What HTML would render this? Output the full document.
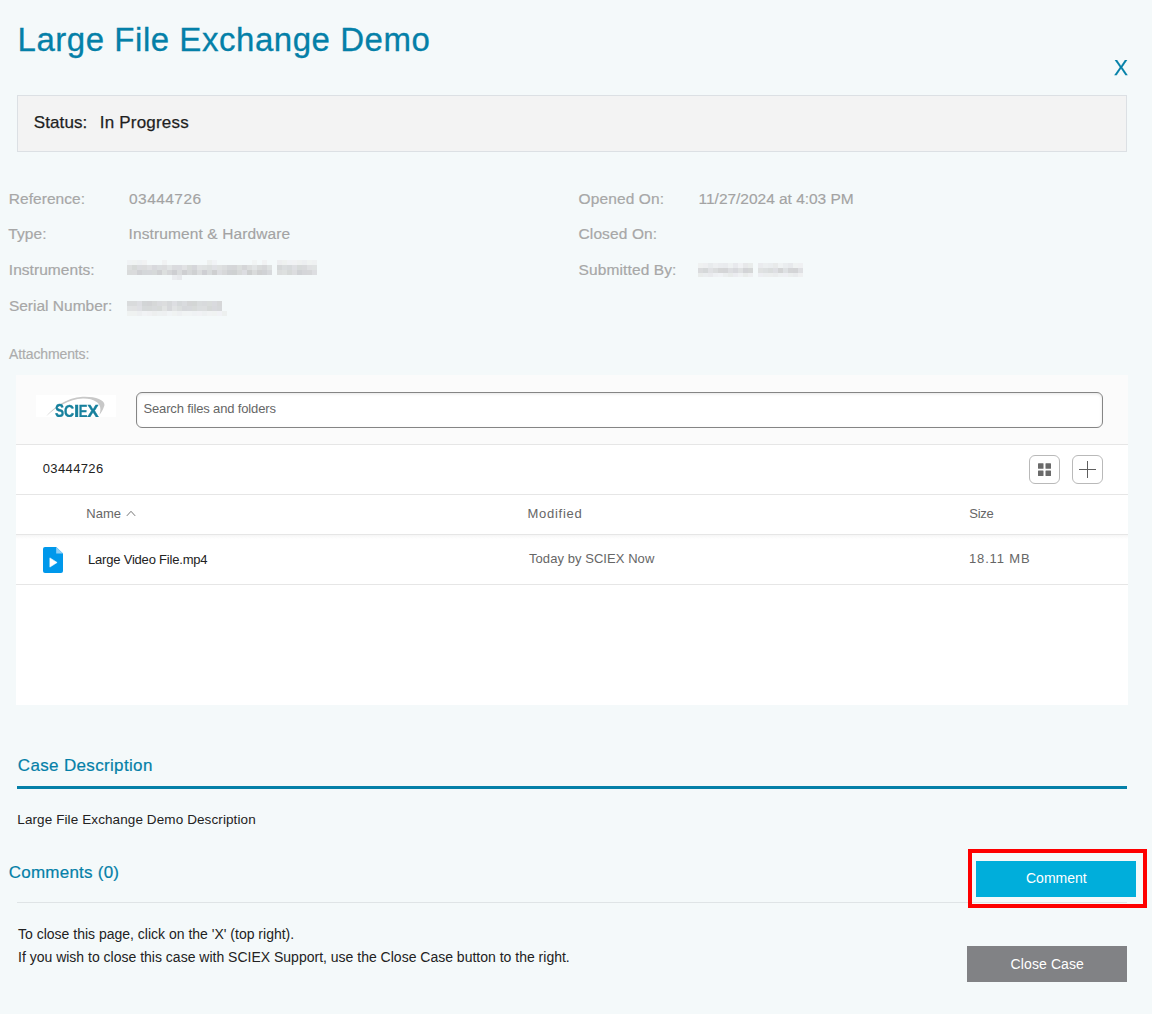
<!DOCTYPE html>
<html>
<head>
<meta charset="utf-8">
<title>Large File Exchange Demo</title>
<style>
html,body{margin:0;padding:0;}
body{width:1152px;height:1014px;background:#f4f9fa;font-family:"Liberation Sans",sans-serif;position:relative;overflow:hidden;color:#222;}
.abs{position:absolute;white-space:nowrap;line-height:1;}
.title{left:17.5px;top:23px;font-size:33px;color:#0480a8;letter-spacing:0.54px;-webkit-text-stroke:0.3px #0480a8;}
.closex{left:1113.6px;top:57px;font-size:22.5px;color:#0480a8;transform:scaleX(0.93);transform-origin:left top;-webkit-text-stroke:0.25px #0480a8;}
.status{left:17px;top:95px;width:1108px;height:55px;border:1px solid #dce0e4;background:#f3f3f3;}
.statustxt{font-size:17px;color:#1f1f1f;top:114px;-webkit-text-stroke:0.25px #1f1f1f;}
.lbl{font-size:15.5px;color:#a7a7a7;letter-spacing:0.12px;-webkit-text-stroke:0.2px #a7a7a7;}
.val{font-size:15.5px;color:#a3a3a3;letter-spacing:0.2px;-webkit-text-stroke:0.15px #a3a3a3;}
.att{left:9px;top:347px;font-size:14px;color:#acacac;letter-spacing:-0.12px;-webkit-text-stroke:0.15px #acacac;}
.panel{left:16px;top:375px;width:1112px;height:330px;background:#fff;}
.phead{left:0;top:0;width:1112px;height:69px;background:#fbfbfb;}
.hline{left:0;width:1112px;height:1px;background:#e6e6e6;}
.search{left:120px;top:17px;width:965px;height:34px;border:1px solid #858585;border-radius:6px;background:#fff;box-shadow:inset 0 1px 3px rgba(0,0,0,0.10);}
.ptxt{font-size:13px;color:#666;}
.dark{color:#222;}
.ibtn{width:29px;height:27px;border:1px solid #b9b9b9;border-radius:6px;background:#fff;top:80px;}
.h2{font-size:17px;color:#0480a8;-webkit-text-stroke:0.2px #0480a8;}
.bar{left:17px;top:786px;width:1110px;height:3px;background:#0480a8;}
.thin{left:17px;top:902px;width:1110px;height:1px;background:#dfe4e6;}
.body14{font-size:14px;color:#222;}
.redbox{left:968px;top:849px;width:171px;height:51px;border:4px solid #fe0000;}
.cbtn{left:976px;top:861px;width:160px;height:36px;background:#00aedb;}
.ccbtn{left:967px;top:946px;width:160px;height:36px;background:#818285;}
.btxt{color:#fff;font-size:14px;}
.blur{filter:blur(2px);background:#bdbdbd;opacity:.6;height:10px;}
</style>
</head>
<body>
<div id="title" class="abs title">Large File Exchange Demo</div>
<div id="closex" class="abs closex">X</div>

<div class="abs status"></div>
<div id="st1" class="abs statustxt" style="left:33.8px;letter-spacing:0.1px;">Status:</div>
<div id="st2" class="abs statustxt" style="left:99.8px;letter-spacing:0.2px;">In Progress</div>

<div id="l1" class="abs lbl" style="left:8.8px;top:191px;letter-spacing:0.05px;">Reference:</div>
<div id="v1" class="abs val" style="left:129px;top:191px;letter-spacing:0.45px;">03444726</div>
<div id="l2" class="abs lbl" style="left:8.2px;top:226px;">Type:</div>
<div id="v2" class="abs val" style="left:128.6px;top:226px;letter-spacing:0.11px;">Instrument &amp; Hardware</div>
<div id="l3" class="abs lbl" style="left:8.8px;top:262px;letter-spacing:0.05px;">Instruments:</div>
<svg class="abs" style="left:127px;top:260px;filter:blur(0.5px);" width="190" height="20" viewBox="0 0 190 20" shape-rendering="crispEdges"><rect x="0" y="0" width="5" height="5" fill="#f0f3f5"/><rect x="5" y="0" width="5" height="5" fill="#f0f3f3"/><rect x="10" y="0" width="5" height="5" fill="#eef1f3"/><rect x="15" y="0" width="5" height="5" fill="#f1f2f3"/><rect x="35" y="0" width="5" height="5" fill="#f0f2f3"/><rect x="80" y="0" width="5" height="5" fill="#edf0ef"/><rect x="85" y="0" width="5" height="5" fill="#f1f3f6"/><rect x="125" y="0" width="5" height="5" fill="#f1f4f4"/><rect x="135" y="0" width="5" height="5" fill="#f1f2f3"/><rect x="150" y="0" width="5" height="5" fill="#edeef0"/><rect x="155" y="0" width="5" height="5" fill="#eef1f0"/><rect x="160" y="0" width="5" height="5" fill="#f0f2f5"/><rect x="165" y="0" width="5" height="5" fill="#f1f2f4"/><rect x="170" y="0" width="5" height="5" fill="#eff1f1"/><rect x="175" y="0" width="5" height="5" fill="#edeff1"/><rect x="180" y="0" width="5" height="5" fill="#f0f3f2"/><rect x="185" y="0" width="5" height="5" fill="#eff1f2"/><rect x="0" y="5" width="5" height="5" fill="#dddfdf"/><rect x="5" y="5" width="5" height="5" fill="#d6d9d8"/><rect x="10" y="5" width="5" height="5" fill="#dbdcdf"/><rect x="15" y="5" width="5" height="5" fill="#dbdcdd"/><rect x="20" y="5" width="5" height="5" fill="#dfe0e2"/><rect x="25" y="5" width="5" height="5" fill="#d8d9dd"/><rect x="30" y="5" width="5" height="5" fill="#dbdee0"/><rect x="35" y="5" width="5" height="5" fill="#dbdcde"/><rect x="40" y="5" width="5" height="5" fill="#e1e4e5"/><rect x="45" y="5" width="5" height="5" fill="#dadbde"/><rect x="50" y="5" width="5" height="5" fill="#dadbdf"/><rect x="55" y="5" width="5" height="5" fill="#e1e2e4"/><rect x="60" y="5" width="5" height="5" fill="#d8dbda"/><rect x="65" y="5" width="5" height="5" fill="#d5d6da"/><rect x="70" y="5" width="5" height="5" fill="#e1e3e4"/><rect x="75" y="5" width="5" height="5" fill="#dfe2e2"/><rect x="80" y="5" width="5" height="5" fill="#dcdfdf"/><rect x="85" y="5" width="5" height="5" fill="#e0e1e5"/><rect x="90" y="5" width="5" height="5" fill="#dfe1e1"/><rect x="95" y="5" width="5" height="5" fill="#dbddde"/><rect x="100" y="5" width="5" height="5" fill="#d5d7d9"/><rect x="105" y="5" width="5" height="5" fill="#d5d6d8"/><rect x="110" y="5" width="5" height="5" fill="#dbdedd"/><rect x="115" y="5" width="5" height="5" fill="#d5d6d8"/><rect x="120" y="5" width="5" height="5" fill="#dcdede"/><rect x="125" y="5" width="5" height="5" fill="#e1e4e5"/><rect x="130" y="5" width="5" height="5" fill="#d9dbdb"/><rect x="135" y="5" width="5" height="5" fill="#d6d7d9"/><rect x="140" y="5" width="5" height="5" fill="#dee1e1"/><rect x="150" y="5" width="5" height="5" fill="#d5d8d9"/><rect x="155" y="5" width="5" height="5" fill="#dadddf"/><rect x="160" y="5" width="5" height="5" fill="#d7dadc"/><rect x="165" y="5" width="5" height="5" fill="#dedfe3"/><rect x="170" y="5" width="5" height="5" fill="#d7dada"/><rect x="175" y="5" width="5" height="5" fill="#d9dadc"/><rect x="180" y="5" width="5" height="5" fill="#e0e1e3"/><rect x="185" y="5" width="5" height="5" fill="#e0e3e3"/><rect x="0" y="10" width="5" height="5" fill="#d9dbdb"/><rect x="5" y="10" width="5" height="5" fill="#dadbdc"/><rect x="10" y="10" width="5" height="5" fill="#d0d1d4"/><rect x="15" y="10" width="5" height="5" fill="#d4d7d9"/><rect x="20" y="10" width="5" height="5" fill="#d5d7da"/><rect x="25" y="10" width="5" height="5" fill="#d6d9d9"/><rect x="30" y="10" width="5" height="5" fill="#cfd0d2"/><rect x="35" y="10" width="5" height="5" fill="#dcdfde"/><rect x="40" y="10" width="5" height="5" fill="#d5d6d8"/><rect x="45" y="10" width="5" height="5" fill="#cdced1"/><rect x="50" y="10" width="5" height="5" fill="#dadcdd"/><rect x="55" y="10" width="5" height="5" fill="#cecfd1"/><rect x="60" y="10" width="5" height="5" fill="#d6d8d9"/><rect x="65" y="10" width="5" height="5" fill="#cfd1d2"/><rect x="70" y="10" width="5" height="5" fill="#dbddde"/><rect x="75" y="10" width="5" height="5" fill="#cecfd3"/><rect x="80" y="10" width="5" height="5" fill="#d8dbdc"/><rect x="85" y="10" width="5" height="5" fill="#cecfd0"/><rect x="90" y="10" width="5" height="5" fill="#dcdde0"/><rect x="95" y="10" width="5" height="5" fill="#d7d8d9"/><rect x="100" y="10" width="5" height="5" fill="#cfd1d3"/><rect x="105" y="10" width="5" height="5" fill="#ced1d1"/><rect x="110" y="10" width="5" height="5" fill="#d7d9d9"/><rect x="115" y="10" width="5" height="5" fill="#dcdde1"/><rect x="120" y="10" width="5" height="5" fill="#cdcfcf"/><rect x="125" y="10" width="5" height="5" fill="#d9dbdb"/><rect x="130" y="10" width="5" height="5" fill="#cfd0d1"/><rect x="135" y="10" width="5" height="5" fill="#d0d2d5"/><rect x="140" y="10" width="5" height="5" fill="#d7d9dc"/><rect x="150" y="10" width="5" height="5" fill="#dbdddd"/><rect x="155" y="10" width="5" height="5" fill="#dde0df"/><rect x="160" y="10" width="5" height="5" fill="#d6d9d8"/><rect x="165" y="10" width="5" height="5" fill="#dcdddf"/><rect x="170" y="10" width="5" height="5" fill="#d0d2d5"/><rect x="175" y="10" width="5" height="5" fill="#d5d6d9"/><rect x="180" y="10" width="5" height="5" fill="#d6d7d9"/><rect x="185" y="10" width="5" height="5" fill="#dddee1"/><rect x="45" y="15" width="5" height="5" fill="#ebedf0"/><rect x="50" y="15" width="5" height="5" fill="#e7e9ec"/></svg>
<div id="l4" class="abs lbl" style="left:8.9px;top:298px;letter-spacing:0.0px;">Serial Number:</div>
<svg class="abs" style="left:127px;top:300.5px;filter:blur(0.5px);" width="100" height="15" viewBox="0 0 100 15" shape-rendering="crispEdges"><rect x="0" y="0" width="5" height="5" fill="#d9dbdc"/><rect x="5" y="0" width="5" height="5" fill="#d9dbdc"/><rect x="10" y="0" width="5" height="5" fill="#dddee2"/><rect x="15" y="0" width="5" height="5" fill="#d2d5d6"/><rect x="20" y="0" width="5" height="5" fill="#d2d3d5"/><rect x="25" y="0" width="5" height="5" fill="#d6d8d8"/><rect x="30" y="0" width="5" height="5" fill="#dadbde"/><rect x="35" y="0" width="5" height="5" fill="#dcddde"/><rect x="40" y="0" width="5" height="5" fill="#d6d8da"/><rect x="45" y="0" width="5" height="5" fill="#dddee2"/><rect x="50" y="0" width="5" height="5" fill="#d5d8da"/><rect x="55" y="0" width="5" height="5" fill="#d9dbde"/><rect x="60" y="0" width="5" height="5" fill="#d4d5d6"/><rect x="65" y="0" width="5" height="5" fill="#d3d6d5"/><rect x="70" y="0" width="5" height="5" fill="#d9dcdd"/><rect x="75" y="0" width="5" height="5" fill="#d8dadc"/><rect x="80" y="0" width="5" height="5" fill="#d9dcdb"/><rect x="85" y="0" width="5" height="5" fill="#d9dade"/><rect x="90" y="0" width="5" height="5" fill="#d6d7d8"/><rect x="0" y="5" width="5" height="5" fill="#e1e3e4"/><rect x="5" y="5" width="5" height="5" fill="#e1e2e3"/><rect x="10" y="5" width="5" height="5" fill="#dfe0e4"/><rect x="15" y="5" width="5" height="5" fill="#d6d9da"/><rect x="20" y="5" width="5" height="5" fill="#d6d9d9"/><rect x="25" y="5" width="5" height="5" fill="#d8dadc"/><rect x="30" y="5" width="5" height="5" fill="#d7dad9"/><rect x="35" y="5" width="5" height="5" fill="#e1e3e3"/><rect x="40" y="5" width="5" height="5" fill="#d7d8db"/><rect x="45" y="5" width="5" height="5" fill="#e1e3e4"/><rect x="50" y="5" width="5" height="5" fill="#dbdede"/><rect x="55" y="5" width="5" height="5" fill="#d6d8db"/><rect x="60" y="5" width="5" height="5" fill="#d7d9dc"/><rect x="65" y="5" width="5" height="5" fill="#d8dbda"/><rect x="70" y="5" width="5" height="5" fill="#dbdedf"/><rect x="75" y="5" width="5" height="5" fill="#dcdedf"/><rect x="80" y="5" width="5" height="5" fill="#d6d9d8"/><rect x="85" y="5" width="5" height="5" fill="#d8d9dd"/><rect x="90" y="5" width="5" height="5" fill="#d6d8da"/><rect x="0" y="10" width="5" height="5" fill="#eff2f1"/><rect x="5" y="10" width="5" height="5" fill="#eff2f1"/><rect x="10" y="10" width="5" height="5" fill="#edeff1"/><rect x="15" y="10" width="5" height="5" fill="#f1f3f5"/><rect x="20" y="10" width="5" height="5" fill="#f0f1f3"/><rect x="25" y="10" width="5" height="5" fill="#edefef"/><rect x="30" y="10" width="5" height="5" fill="#eef1f2"/><rect x="35" y="10" width="5" height="5" fill="#eef0f1"/><rect x="40" y="10" width="5" height="5" fill="#f1f4f6"/><rect x="45" y="10" width="5" height="5" fill="#f0f3f2"/><rect x="50" y="10" width="5" height="5" fill="#eef0f2"/><rect x="55" y="10" width="5" height="5" fill="#f1f4f4"/><rect x="60" y="10" width="5" height="5" fill="#f1f4f5"/><rect x="65" y="10" width="5" height="5" fill="#eff2f4"/><rect x="70" y="10" width="5" height="5" fill="#f1f2f5"/><rect x="75" y="10" width="5" height="5" fill="#eef1f2"/><rect x="80" y="10" width="5" height="5" fill="#f1f3f4"/><rect x="85" y="10" width="5" height="5" fill="#f0f3f2"/><rect x="90" y="10" width="5" height="5" fill="#f1f2f6"/><rect x="95" y="10" width="5" height="5" fill="#edf0ef"/></svg>

<div id="l5" class="abs lbl" style="left:578.5px;top:191px;">Opened On:</div>
<div id="v5" class="abs val" style="left:698.6px;top:191px;letter-spacing:-0.03px;">11/27/2024 at 4:03 PM</div>
<div id="l6" class="abs lbl" style="left:578.5px;top:226px;">Closed On:</div>
<div id="l7" class="abs lbl" style="left:578.5px;top:262px;">Submitted By:</div>
<svg class="abs" style="left:698px;top:263px;filter:blur(0.5px);" width="105" height="14" viewBox="0 0 105 14" shape-rendering="crispEdges"><rect x="0" y="0" width="5" height="5" fill="#eff1f1"/><rect x="5" y="0" width="5" height="5" fill="#eeeff1"/><rect x="10" y="0" width="5" height="5" fill="#e8ebed"/><rect x="15" y="0" width="5" height="5" fill="#edeff1"/><rect x="20" y="0" width="5" height="5" fill="#eaecef"/><rect x="25" y="0" width="5" height="5" fill="#e9ebee"/><rect x="30" y="0" width="5" height="5" fill="#eef1f2"/><rect x="35" y="0" width="5" height="5" fill="#e8e9ed"/><rect x="40" y="0" width="5" height="5" fill="#f0f1f4"/><rect x="50" y="0" width="5" height="5" fill="#e9eceb"/><rect x="45" y="0" width="5" height="5" fill="#e7e8ea"/><rect x="60" y="0" width="5" height="5" fill="#eaebee"/><rect x="65" y="0" width="5" height="5" fill="#eceff0"/><rect x="70" y="0" width="5" height="5" fill="#eaedef"/><rect x="75" y="0" width="5" height="5" fill="#e8eaea"/><rect x="80" y="0" width="5" height="5" fill="#eff2f3"/><rect x="85" y="0" width="5" height="5" fill="#eaedef"/><rect x="90" y="0" width="5" height="5" fill="#e7e9ec"/><rect x="95" y="0" width="5" height="5" fill="#eff2f2"/><rect x="100" y="0" width="5" height="5" fill="#eff0f2"/><rect x="0" y="5" width="5" height="5" fill="#dadbdd"/><rect x="5" y="5" width="5" height="5" fill="#d5d8d9"/><rect x="10" y="5" width="5" height="5" fill="#e0e1e4"/><rect x="15" y="5" width="5" height="5" fill="#dbddde"/><rect x="20" y="5" width="5" height="5" fill="#d5d6d7"/><rect x="25" y="5" width="5" height="5" fill="#d4d5d7"/><rect x="30" y="5" width="5" height="5" fill="#dddee1"/><rect x="35" y="5" width="5" height="5" fill="#d8d9dd"/><rect x="40" y="5" width="5" height="5" fill="#dfe1e2"/><rect x="50" y="5" width="5" height="5" fill="#d5d7d7"/><rect x="45" y="5" width="5" height="5" fill="#d3d4d7"/><rect x="60" y="5" width="5" height="5" fill="#e0e2e2"/><rect x="65" y="5" width="5" height="5" fill="#dde0e1"/><rect x="70" y="5" width="5" height="5" fill="#dadddd"/><rect x="75" y="5" width="5" height="5" fill="#dedfe3"/><rect x="80" y="5" width="5" height="5" fill="#d3d4d5"/><rect x="85" y="5" width="5" height="5" fill="#dee1e3"/><rect x="90" y="5" width="5" height="5" fill="#d4d5d7"/><rect x="95" y="5" width="5" height="5" fill="#d3d4d6"/><rect x="100" y="5" width="5" height="5" fill="#dfe0e3"/><rect x="0" y="10" width="5" height="4" fill="#e9eceb"/><rect x="5" y="10" width="5" height="4" fill="#eaedef"/><rect x="10" y="10" width="5" height="4" fill="#e9eaed"/><rect x="15" y="10" width="5" height="4" fill="#eef0f3"/><rect x="20" y="10" width="5" height="4" fill="#f0f2f5"/><rect x="25" y="10" width="5" height="4" fill="#ebeeef"/><rect x="30" y="10" width="5" height="4" fill="#e8ebea"/><rect x="35" y="10" width="5" height="4" fill="#ebecf0"/><rect x="40" y="10" width="5" height="4" fill="#eff1f3"/><rect x="50" y="10" width="5" height="4" fill="#eeeff1"/><rect x="45" y="10" width="5" height="4" fill="#e9eceb"/><rect x="60" y="10" width="5" height="4" fill="#edeef2"/><rect x="65" y="10" width="5" height="4" fill="#ebeeef"/><rect x="70" y="10" width="5" height="4" fill="#eceeee"/><rect x="75" y="10" width="5" height="4" fill="#eaeced"/><rect x="80" y="10" width="5" height="4" fill="#edf0f1"/><rect x="85" y="10" width="5" height="4" fill="#eeeff3"/><rect x="90" y="10" width="5" height="4" fill="#ebeeee"/><rect x="95" y="10" width="5" height="4" fill="#e9ebed"/><rect x="100" y="10" width="5" height="4" fill="#eff0f1"/></svg>

<div id="att" class="abs att">Attachments:</div>

<div class="abs panel">
  <div class="abs phead"></div>
  <div class="abs hline" style="top:69px;"></div>
  <div class="abs search"></div>
  <div id="p1" class="abs ptxt" style="left:127.5px;top:27px;letter-spacing:-0.15px;">Search files and folders</div>
  <div id="p2" class="abs ptxt dark" style="left:26.7px;top:87px;letter-spacing:0.38px;">03444726</div>
  <div class="abs ibtn" style="left:1013px;"></div>
  <div class="abs ibtn" style="left:1056px;"></div>
  <div class="abs hline" style="top:119px;"></div>
  <div id="p3" class="abs ptxt" style="left:70.2px;top:132px;letter-spacing:0.05px;">Name</div>
  <div id="p4" class="abs ptxt" style="left:511.4px;top:132px;letter-spacing:0.75px;">Modified</div>
  <div id="p5" class="abs ptxt" style="left:953.3px;top:132px;letter-spacing:-0.3px;">Size</div>
  <div class="abs hline" style="top:159px;"></div>
  <div class="abs" style="left:0;top:160px;width:1112px;height:4px;background:linear-gradient(#f6f6f6,#fff);"></div>
  <div id="p6" class="abs ptxt dark" style="left:72px;top:178px;letter-spacing:-0.2px;">Large Video File.mp4</div>
  <div id="p7" class="abs ptxt" style="left:513px;top:177px;letter-spacing:0.06px;">Today by SCIEX Now</div>
  <div id="p8" class="abs ptxt" style="left:953px;top:177px;letter-spacing:0.85px;">18.11 MB</div>
  <div class="abs hline" style="top:209px;"></div>

  <!-- logo -->
  <div class="abs" style="left:20px;top:20px;width:80px;height:22px;background:#fff;"></div>
  <svg class="abs" style="left:20px;top:20px;filter:blur(0.4px);" width="80" height="22" viewBox="0 0 80 22">
    <path d="M10,21.4 C17,13 30,2.6 46.5,1.7 C60.5,1.1 70.8,5.6 68,11.6 C67,15 65,18 63.4,19.9 C65.2,15 64.8,10.2 61,7.2 C57,4.2 52,3.4 47,3.5 C33,3.9 20,12.3 10,21.4 Z" fill="#c8c8c8"/>
    <g font-family="Liberation Sans, sans-serif" font-weight="bold" fill="#17809d" stroke="#17809d" stroke-width="0.35">
      <text transform="translate(19.0,21.7) scale(0.756,1)" font-size="18.1">S</text>
      <text transform="translate(28.02,21.7) scale(0.90,1)" font-size="15.6">C</text>
      <text transform="translate(38.05,21.7) scale(1.2,1)" font-size="15.6">I</text>
      <text transform="translate(42.83,21.7) scale(0.834,1)" font-size="15.6">E</text>
      <text transform="translate(51.25,21.7) scale(1.106,1)" font-size="15.6">X</text>
    </g>
  </svg>
  <!-- grid icon -->
  <svg class="abs" style="left:1021px;top:87px;" width="15" height="15" viewBox="0 0 15 15">
    <rect x="1" y="1.2" width="5.5" height="5.5" rx="0.5" fill="#6a6a6a"/><rect x="8.5" y="1.2" width="5.5" height="5.5" rx="0.5" fill="#6a6a6a"/>
    <rect x="1" y="8.5" width="5.5" height="5.5" rx="0.5" fill="#6a6a6a"/><rect x="8.5" y="8.5" width="5.5" height="5.5" rx="0.5" fill="#6a6a6a"/>
  </svg>
  <!-- plus icon -->
  <div class="abs" style="left:1063px;top:94px;width:17px;height:1px;background:#5e5e5e;"></div>
  <div class="abs" style="left:1071px;top:86px;width:1px;height:17px;background:#5e5e5e;"></div>
  <!-- caret -->
  <svg class="abs" style="left:110px;top:135px;" width="10" height="7" viewBox="0 0 10 7"><path d="M0.8,5.9 L5,1.3 L9.2,5.9" fill="none" stroke="#777" stroke-width="1"/></svg>
  <!-- file icon -->
  <svg class="abs" style="left:27px;top:172px;" width="20" height="26" viewBox="0 0 20 26">
    <path d="M2,0 H13.2 L20,6.4 V24 a2,2 0 0 1 -2,2 H2 a2,2 0 0 1 -2,-2 V2 a2,2 0 0 1 2,-2 Z" fill="#0098eb"/>
    <path d="M13.2,0 V6.4 H20 Z" fill="#8fd0f7"/>
    <path d="M6.9,10.9 L14.1,15.5 L6.9,20.1 Z" fill="#fff" stroke="#fff" stroke-width="0.6" stroke-linejoin="round"/>
  </svg>
</div>

<div id="h1" class="abs h2" style="left:17.8px;top:757px;letter-spacing:0.34px;">Case Description</div>
<div class="abs bar"></div>
<div id="b1" class="abs body14" style="left:17.3px;top:813px;font-size:13.5px;letter-spacing:0.1px;">Large File Exchange Demo Description</div>
<div id="h2" class="abs h2" style="left:8.7px;top:864px;letter-spacing:0.24px;">Comments (0)</div>
<div class="abs thin"></div>
<div class="abs cbtn"></div>
<div class="abs redbox"></div>
<div id="bt1" class="abs btxt" style="left:1026px;top:871px;">Comment</div>
<div id="b2" class="abs body14" style="left:18px;top:927px;">To close this page, click on the 'X' (top right).</div>
<div id="b3" class="abs body14" style="left:18px;top:950px;">If you wish to close this case with SCIEX Support, use the Close Case button to the right.</div>
<div class="abs ccbtn"></div>
<div id="bt2" class="abs btxt" style="left:1010.6px;top:957px;letter-spacing:0.1px;">Close Case</div>
</body>
</html>
